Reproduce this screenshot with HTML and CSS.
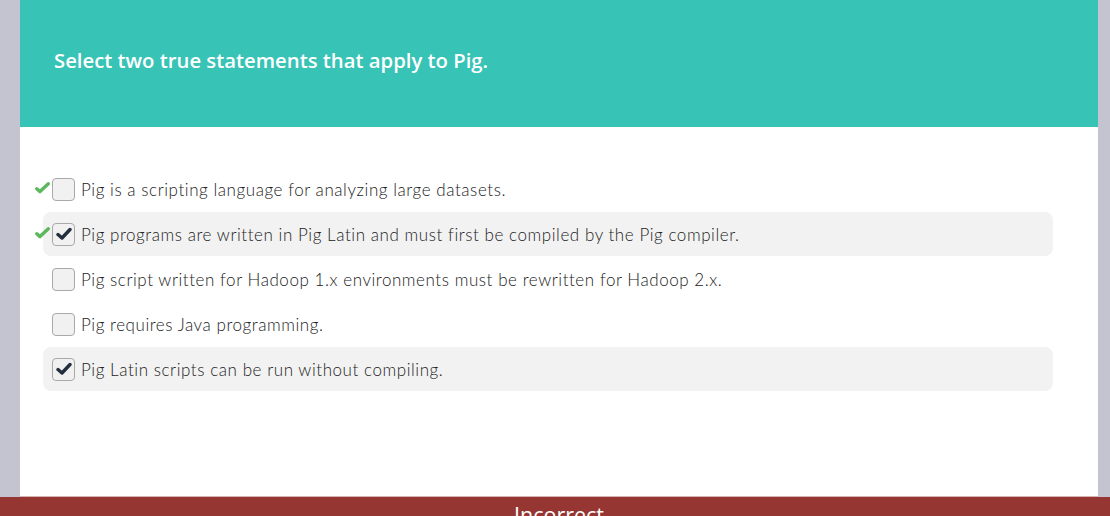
FILE: index.html
```html
<!DOCTYPE html>
<html>
<head>
<meta charset="utf-8">
<link rel="stylesheet" href="styles.css">
</head>
<body>
<div class="page">
  <main class="card">
    <header class="head">
      <h1 class="title">Select two true statements that apply to Pig.</h1>
    </header>
    <ul class="options">
      <li class="opt">
        <span class="mark"><svg width="15" height="12" viewBox="0 0 15 12"><path d="M1.8 6.8 L5 9.6 L13.3 1.8" fill="none" stroke="#5cb85c" stroke-width="3.4" stroke-linecap="round" stroke-linejoin="round"/></svg></span>
        <span class="box"></span>
        <span class="label">Pig is a scripting language for analyzing large datasets.</span>
      </li>
      <li class="opt sel">
        <span class="mark"><svg width="15" height="12" viewBox="0 0 15 12"><path d="M1.8 6.8 L5 9.6 L13.3 1.8" fill="none" stroke="#5cb85c" stroke-width="3.4" stroke-linecap="round" stroke-linejoin="round"/></svg></span>
        <span class="box on"><svg width="16" height="14" viewBox="0 0 16 14"><path d="M2 7.5 L6 11 L14 2.5" fill="none" stroke="#232f3e" stroke-width="3.4" stroke-linecap="round" stroke-linejoin="round"/></svg></span>
        <span class="label">Pig programs are written in Pig Latin and must first be compiled by the Pig compiler.</span>
      </li>
      <li class="opt">
        <span class="box"></span>
        <span class="label">Pig script written for Hadoop 1.x environments must be rewritten for Hadoop 2.x.</span>
      </li>
      <li class="opt">
        <span class="box"></span>
        <span class="label">Pig requires Java programming.</span>
      </li>
      <li class="opt sel">
        <span class="box on"><svg width="16" height="14" viewBox="0 0 16 14"><path d="M2 7.5 L6 11 L14 2.5" fill="none" stroke="#232f3e" stroke-width="3.4" stroke-linecap="round" stroke-linejoin="round"/></svg></span>
        <span class="label">Pig Latin scripts can be run without compiling.</span>
      </li>
    </ul>
  </main>
  <footer class="result"><span class="result-text">Incorrect</span></footer>
</div>
</body>
</html>
```

FILE: styles.css
```css
html, body {
  margin: 0;
  padding: 0;
  height: 100%;
  overflow: hidden;
}
body {
  background: #c4c4d0;
  font-family: "Open Sans", "Liberation Sans", sans-serif;
}
.page {
  display: flex;
  flex-direction: column;
  height: 516px;
}
.card {
  margin-left: 20px;
  width: 1078px;
  height: 496px;
  background: #ffffff;
  border-bottom: 1px solid #d9b3b1;
  flex: none;
}
.head {
  background: #37c3b5;
  height: 127px;
  display: flex;
  align-items: center;
  padding-left: 34px;
  box-sizing: border-box;
}
.title {
  margin: 0 0 8px 0;
  color: #ffffff;
  font-size: 20.3px;
  font-weight: 600;
  letter-spacing: 0;
}
.options {
  list-style: none;
  margin: 40px 0 0 23px;
  padding: 0;
  width: 1010px;
  display: flex;
  flex-direction: column;
  gap: 1px;
}
.opt {
  position: relative;
  height: 44px;
  display: flex;
  align-items: center;
  padding-left: 9px;
  border-radius: 8px;
}
.opt.sel {
  background: #f2f2f2;
}
.mark {
  position: absolute;
  left: -8px;
  top: 15px;
  width: 15px;
  height: 12px;
  display: flex;
}
.box {
  width: 21px;
  height: 21px;
  border: 1.5px solid #a9a9a9;
  border-radius: 4px;
  background: #f1f1f1;
  display: flex;
  align-items: center;
  justify-content: center;
  flex: none;
}
.label {
  margin-left: 6px;
  font-family: "Lato", "Open Sans", sans-serif;
  font-size: 17px;
  font-weight: 300;
  letter-spacing: 0.56px;
  color: #222222;
}
.result {
  flex: 1;
  background: #963633;
  color: #ffffff;
  font-size: 21.5px;
  line-height: 20px;
  padding-top: 8px;
  margin: 0;
}
.result-text {
  display: block;
  width: 1078px;
  margin-left: 20px;
  text-align: center;
}
```
